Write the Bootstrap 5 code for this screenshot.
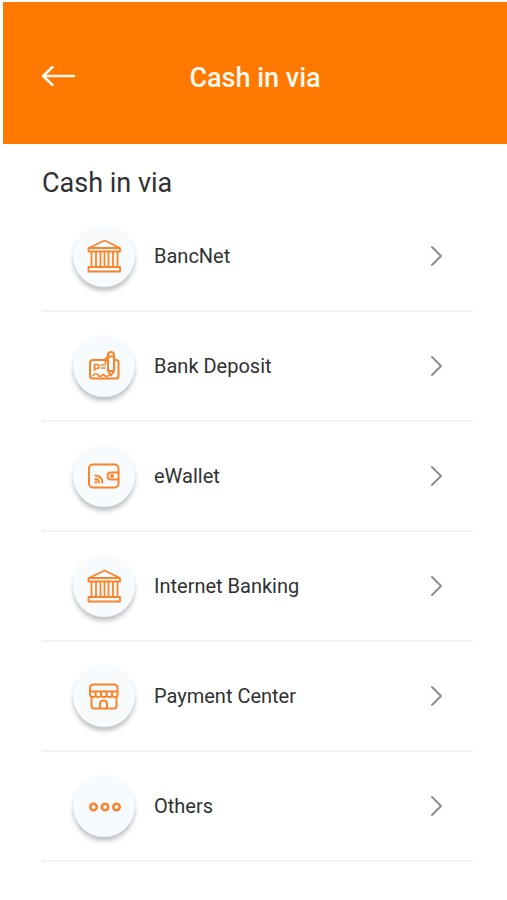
<!DOCTYPE html>
<html lang="en">
<head>
<meta charset="utf-8">
<meta name="viewport" content="width=device-width, initial-scale=1">
<title>Cash in via</title>
<link href="https://cdn.jsdelivr.net/npm/bootstrap@5.3.0/dist/css/bootstrap.min.css" rel="stylesheet">
<style>
body { font-family: Roboto, "Liberation Sans", sans-serif; color: #2f3133; background: #fff; }
.top-bar { margin: 2px 0 0 3px; padding: 54px 36px 44px; background: #ff7900; }
.back-btn { width: 40px; height: 40px; margin-bottom: 4px; }
.top-title { font-size: 27px; line-height: 32px; font-weight: 500; color: #fff8ee; }
.content { padding: 23px 34px 0 42px; }
.section-title { font-size: 27px; line-height: 32px; font-weight: 400; }
.option { padding: 23px 24px 23px 31px; border-bottom: 2px solid #f1f2f3; font-size: 20px; line-height: 24px; color: inherit; }
.option-list { margin-top: 3px; }
.disc { width: 62px; height: 62px; margin-right: 19px; background: #f7fbfe; box-shadow: 0 4px 4px rgba(60, 70, 80, .32); }
.disc svg { fill: none; stroke: #fb842a; stroke-width: 2; stroke-linejoin: round; stroke-linecap: round; }
</style>
</head>
<body>
<svg class="d-none" aria-hidden="true">
  <symbol id="bank" viewBox="0 0 40 40">
    <g stroke-width="1.800"><path d="M6 11.500 20.500 4.500 35 11.500M4.500 12H36V15.500H4.500ZM4.500 31H36V35.500H4.500ZM7.500 15.500V31M12 15.500V31M16.500 15.500V31M20.500 15.500V31M24.500 15.500V31M29 15.500V31M33.500 15.500V31"/></g>
  </symbol>
  <symbol id="deposit" viewBox="0 0 40 40">
    <path d="M22 14H9Q6 14 6 17V29.500Q6 32.500 9 32.500H32Q34.500 32.500 34.500 30V16.500Q34.500 14 32 14H30"/>
    <g stroke-width="1.700"><path d="M10.500 24.500V18.500H13Q15 18.500 15 20.500T13 22.500H10.500M17.500 19H21M17.500 22H21M9 29.500Q12 26 14.500 29.500Q17 31.500 19 28.500L22 30.500 25 29.500"/></g>
    <path d="M24 9Q24 6 27 6T30 9V25L27 29.500 24 25ZM24 10.500H30M24 25H30M23.500 11 21.500 13V17"/>
  </symbol>
  <symbol id="wallet" viewBox="0 0 40 40">
    <rect x="5" y="8.500" width="29.500" height="23" rx="4"/>
    <path d="M34.500 16.500H27Q23.500 16.500 23.500 20T27 23.500H34.500"/>
    <circle cx="28" cy="20" r="1"/>
    <g stroke-width="2"><path d="M11.500 19.500Q18 20 18.500 26.500M11.500 23Q14.500 23 15 26.500"/></g>
    <circle cx="11.800" cy="26" r=".5"/>
  </symbol>
  <symbol id="store" viewBox="0 0 40 40">
    <path d="M6 15.500V12Q6 8.500 9.500 8.500H30Q33.500 8.500 33.500 12V15.500M6 15.500H33.500M6 15.500V18.500Q6 21 9 21T11.500 18.500Q11.500 21 14.500 21T17 18.500Q17 21 20 21T22.500 18.500Q22.500 21 25.500 21T28 18.500Q28 21 31 21T33.500 18.500V15.500M11.500 15.500V18.500M17 15.500V18.500M22.500 15.500V18.500M28 15.500V18.500M7.500 21V30Q7.500 32.500 10 32.500H30Q32.500 32.500 32.500 30V21M16 32V28Q16 24.500 19.500 24.500T23 28V32"/>
  </symbol>
  <symbol id="dots" viewBox="0 0 40 40">
    <g stroke-width="2.600"><circle cx="9.500" cy="21" r="3.200"/><circle cx="21" cy="21" r="3.200"/><circle cx="32.500" cy="21" r="3.200"/></g>
  </symbol>
  <symbol id="chevron" viewBox="0 0 14 24">
    <path d="M2 3 11 12 2 21" fill="none" stroke="#8c8e91" stroke-width="2" stroke-linecap="round" stroke-linejoin="round"/>
  </symbol>
</svg>

<header class="top-bar row g-0 align-items-center">
  <div class="col">
    <button type="button" class="back-btn btn p-0 border-0 d-flex align-items-center justify-content-center" aria-label="Back">
      <svg width="40" height="24" viewBox="0 0 40 24" fill="none" stroke="#fff8ee" stroke-width="2.500" stroke-linecap="round" stroke-linejoin="round" aria-hidden="true"><path d="M35 12H4M13.500 3 4 12 13.500 21"/></svg>
    </button>
  </div>
  <h1 class="top-title col-auto m-0">Cash in via</h1>
  <div class="col"></div>
</header>

<main class="content">
  <h2 class="section-title mb-0">Cash in via</h2>
  <nav class="option-list d-flex flex-column" aria-label="Cash in options">
    <a href="#bancnet" class="option d-flex align-items-center text-decoration-none"><span class="disc rounded-circle d-flex align-items-center justify-content-center"><svg width="40" height="40" aria-hidden="true"><use href="#bank"/></svg></span><span class="flex-grow-1">BancNet</span><svg width="24" height="24" aria-hidden="true"><use href="#chevron"/></svg></a>
    <a href="#deposit-options" class="option d-flex align-items-center text-decoration-none"><span class="disc rounded-circle d-flex align-items-center justify-content-center"><svg width="40" height="40" aria-hidden="true"><use href="#deposit"/></svg></span><span class="flex-grow-1">Bank Deposit</span><svg width="24" height="24" aria-hidden="true"><use href="#chevron"/></svg></a>
    <a href="#ewallet" class="option d-flex align-items-center text-decoration-none"><span class="disc rounded-circle d-flex align-items-center justify-content-center"><svg width="40" height="40" aria-hidden="true"><use href="#wallet"/></svg></span><span class="flex-grow-1">eWallet</span><svg width="24" height="24" aria-hidden="true"><use href="#chevron"/></svg></a>
    <a href="#internet-banking" class="option d-flex align-items-center text-decoration-none"><span class="disc rounded-circle d-flex align-items-center justify-content-center"><svg width="40" height="40" aria-hidden="true"><use href="#bank"/></svg></span><span class="flex-grow-1">Internet Banking</span><svg width="24" height="24" aria-hidden="true"><use href="#chevron"/></svg></a>
    <a href="#payment-center" class="option d-flex align-items-center text-decoration-none"><span class="disc rounded-circle d-flex align-items-center justify-content-center"><svg width="40" height="40" aria-hidden="true"><use href="#store"/></svg></span><span class="flex-grow-1">Payment Center</span><svg width="24" height="24" aria-hidden="true"><use href="#chevron"/></svg></a>
    <a href="#others" class="option d-flex align-items-center text-decoration-none"><span class="disc rounded-circle d-flex align-items-center justify-content-center"><svg width="40" height="40" aria-hidden="true"><use href="#dots"/></svg></span><span class="flex-grow-1">Others</span><svg width="24" height="24" aria-hidden="true"><use href="#chevron"/></svg></a>
  </nav>
</main>
<script src="https://cdn.jsdelivr.net/npm/bootstrap@5.3.0/dist/js/bootstrap.bundle.min.js"></script>
</body>
</html>
